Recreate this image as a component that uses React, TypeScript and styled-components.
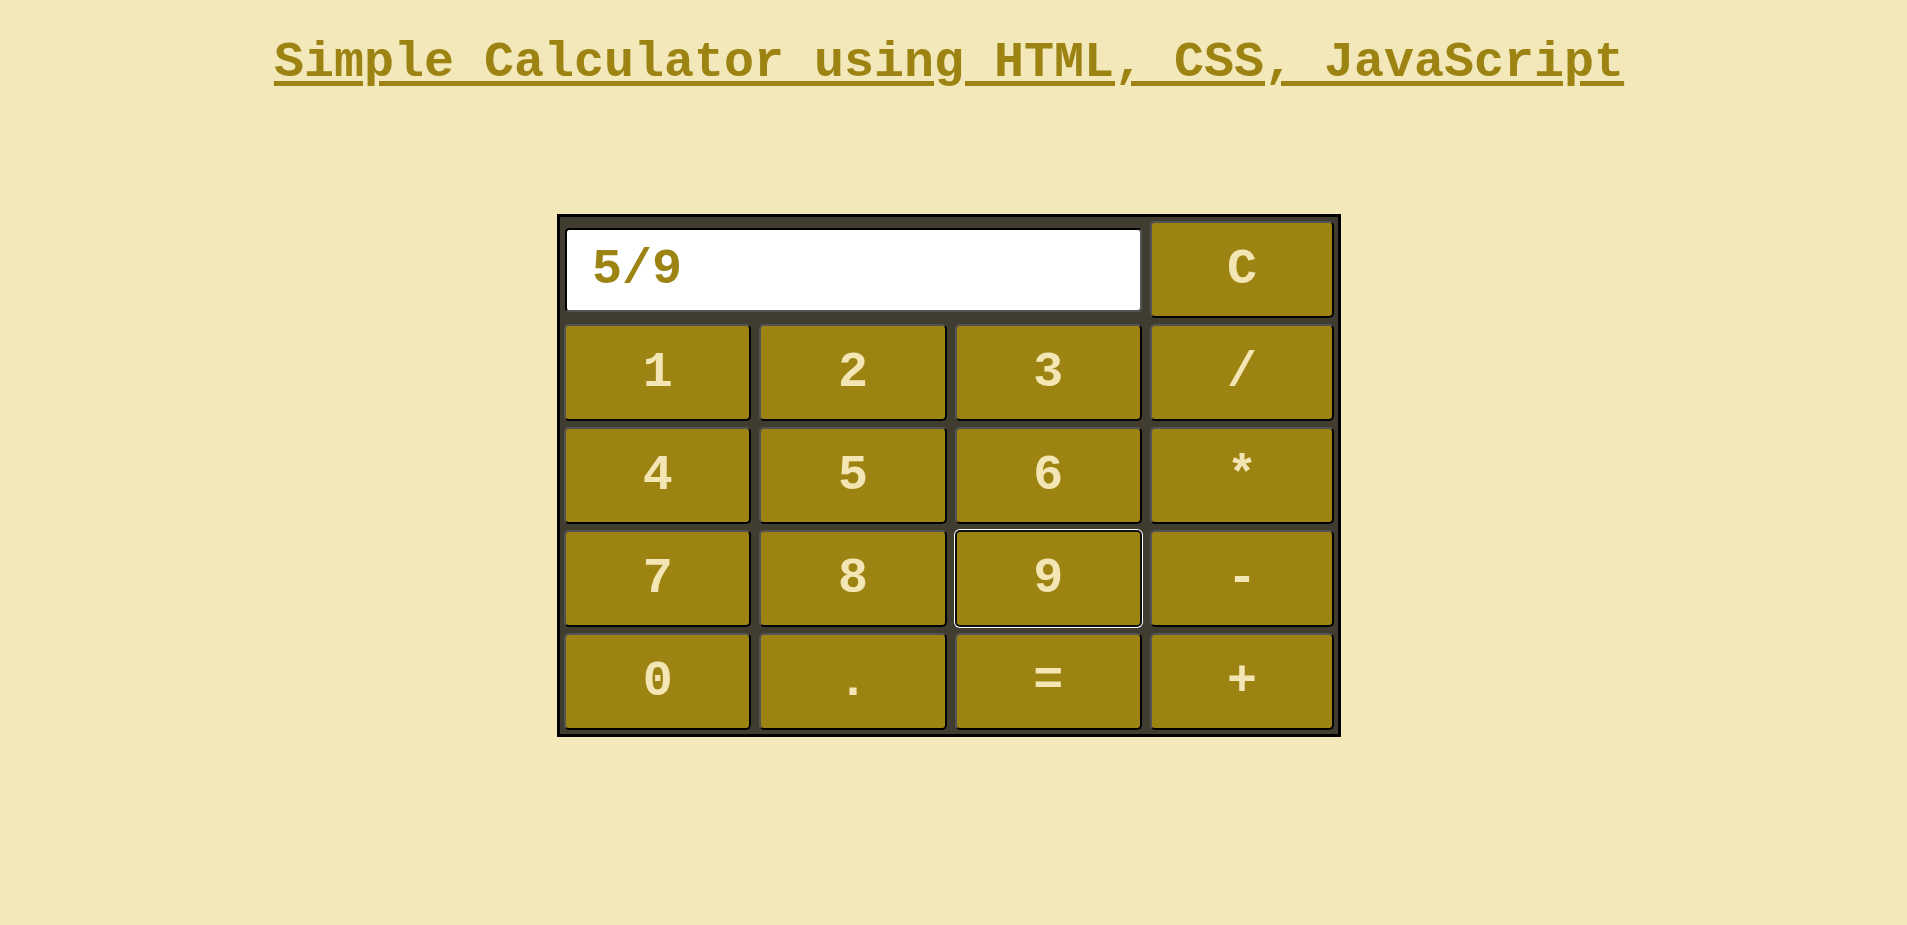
import React, { useState } from "react";
import styled, { createGlobalStyle } from "styled-components";

const GlobalStyle = createGlobalStyle`
  html, body {
    margin: 0;
    padding: 0;
    background: #f3e8ba;
  }
  body {
    font-family: "Liberation Mono", "Courier New", monospace;
  }
`;

const Page = styled.div`
  min-height: 925px;
  padding-right: 9px;
  display: flex;
  flex-direction: column;
  align-items: center;
`;

const Title = styled.h1`
  margin: 34px 0 0;
  font-size: 50px;
  line-height: 57px;
  font-weight: bold;
  color: #9c8312;
  text-decoration: underline;
  text-underline-offset: 5px;
  white-space: pre;
`;

const Calc = styled.div`
  margin-top: 123px;
  width: 770px;
  padding: 4px;
  border: 3px solid #000;
  background: #403c30;
  display: grid;
  grid-template-columns: repeat(4, 1fr);
  grid-template-rows: repeat(5, 97px);
  column-gap: 8px;
  row-gap: 6px;
`;

const Display = styled.input`
  grid-column: 1 / span 3;
  align-self: center;
  box-sizing: border-box;
  width: 577px;
  height: 84px;
  margin-left: 1px;
  padding: 0 20px 0 25px;
  border: 2px solid;
  border-color: #000 #545454 #545454 #000;
  border-radius: 4px;
  background: #fff;
  color: #9c8312;
  font-family: "Liberation Mono", "Courier New", monospace;
  font-weight: bold;
  font-size: 50px;
  outline: none;
`;

const Key = styled.button<{ $focused?: boolean }>`
  box-sizing: border-box;
  width: 100%;
  height: 100%;
  margin: 0;
  padding: 0;
  border: 2px solid;
  border-color: ${(p) => (p.$focused ? "#101010" : "#545454 #000 #000 #545454")};
  border-radius: 5px;
  box-shadow: ${(p) => (p.$focused ? "0 0 0 1px #fff" : "none")};
  background: #9c8312;
  color: #f3e6b4;
  font-family: "Liberation Mono", "Courier New", monospace;
  font-weight: bold;
  font-size: 50px;
  cursor: pointer;
  outline: none;
`;

const rows = [
  ["1", "2", "3", "/"],
  ["4", "5", "6", "*"],
  ["7", "8", "9", "-"],
  ["0", ".", "=", "+"],
];

const App = () => {
  const [value, setValue] = useState("5/9");
  const [focused, setFocused] = useState("9");

  const press = (k: string) => {
    setFocused(k);
    if (k === "C") {
      setValue("");
    } else if (k === "=") {
      try {
        // eslint-disable-next-line no-new-func
        setValue(String(new Function("return (" + value + ")")()));
      } catch (e) {
        setValue("Error");
      }
    } else {
      setValue(value + k);
    }
  };

  return (
    <>
      <GlobalStyle />
      <Page>
        <Title>Simple Calculator using HTML, CSS, JavaScript</Title>
        <Calc>
          <Display type="text" value={value} readOnly />
          <Key $focused={focused === "C"} onClick={() => press("C")}>
            C
          </Key>
          {rows.flat().map((k) => (
            <Key key={k} $focused={focused === k} onClick={() => press(k)}>
              {k}
            </Key>
          ))}
        </Calc>
      </Page>
    </>
  );
};

export default App;
